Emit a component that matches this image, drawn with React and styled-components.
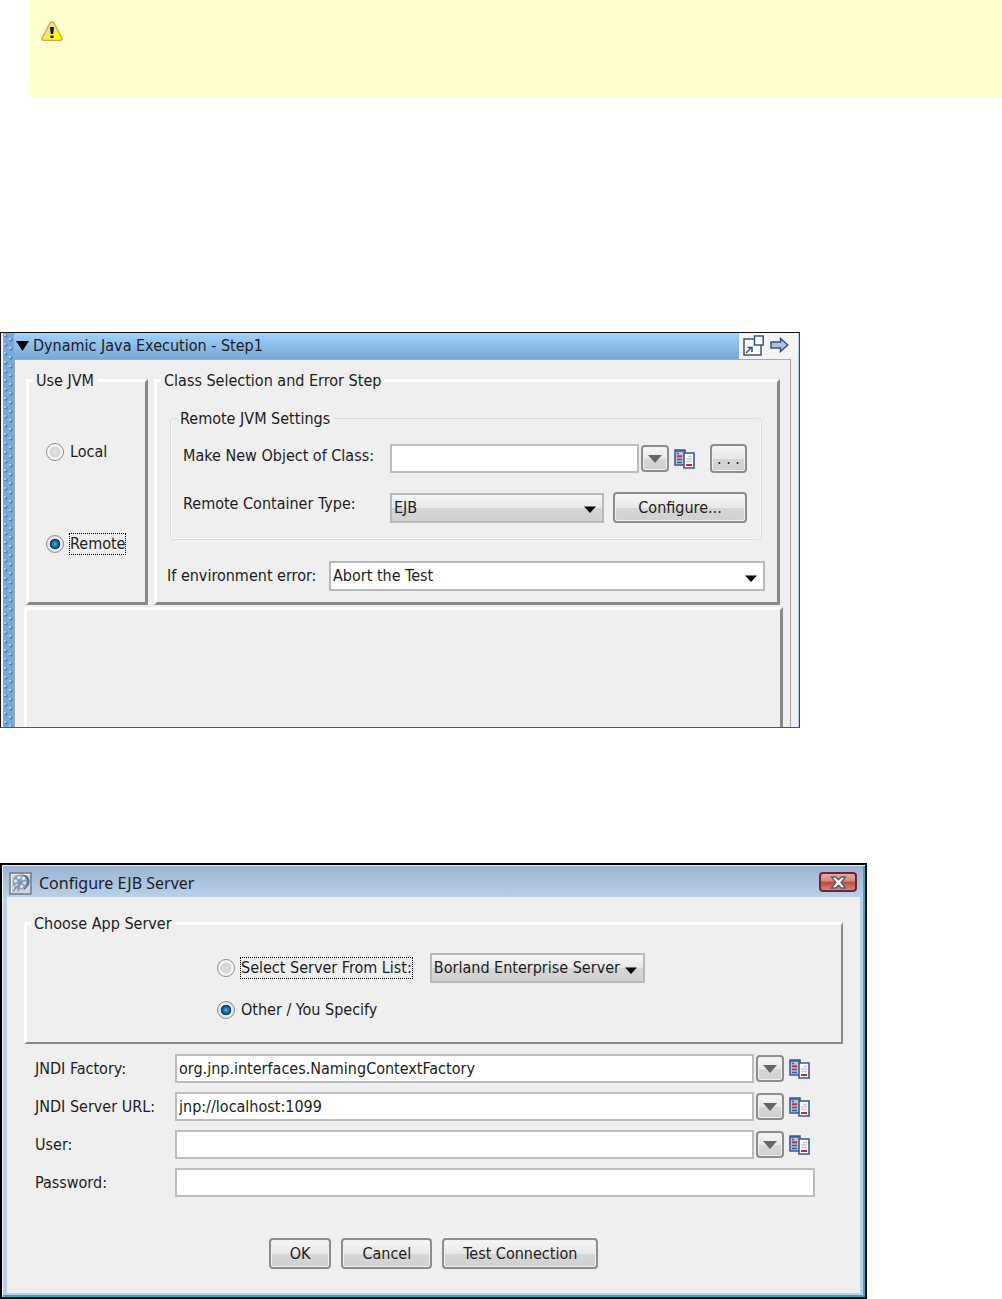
import React from "react"
import styled, { createGlobalStyle, css } from "styled-components"

const App = () => (
  <Page>
    <GlobalStyle />
    <Note>
      <WarningIcon />
    </Note>
    <StepEditor />
    <ServerDialog />
  </Page>
)

export default App

const StepEditor = () => (
  <StepWindow>
    <Grip />
    <StepMain>
      <StepHeader>
        <StepTitle>
          <svg width="13" height="10" viewBox="0 0 13 10" aria-hidden="true">
            <path d="M0 0h13L6.5 10z" fill="#000" />
          </svg>
          Dynamic Java Execution - Step1
        </StepTitle>
        <StepTools>
          <ToolButton aria-label="Pop out">
            <PopOutIcon />
          </ToolButton>
          <ToolButton aria-label="Next">
            <NextIcon />
          </ToolButton>
        </StepTools>
      </StepHeader>
      <StepBody>
        <StepColumns>
          <Group>
            <legend>Use JVM</legend>
            <JvmOptions>
              <RadioLabel>
                <Radio name="jvm" />
                <span>Local</span>
              </RadioLabel>
              <RadioLabel $focused>
                <Radio name="jvm" defaultChecked />
                <span>Remote</span>
              </RadioLabel>
            </JvmOptions>
          </Group>
          <Group>
            <legend>Class Selection and Error Step</legend>
            <ClassArea>
              <SettingsGroup>
                <legend>Remote JVM Settings</legend>
                <SettingsGrid>
                  <label htmlFor="class">Make New Object of Class:</label>
                  <ClassRow>
                    <TextField id="class" />
                    <FieldTools />
                    <MoreButton aria-label="Browse">. . .</MoreButton>
                  </ClassRow>
                  <label htmlFor="container">Remote Container Type:</label>
                  <ContainerRow>
                    <Combo id="container" options={["EJB"]} />
                    <Button>Configure...</Button>
                  </ContainerRow>
                </SettingsGrid>
              </SettingsGroup>
              <ErrorRow>
                <label htmlFor="onerror">If environment error:</label>
                <Combo id="onerror" options={["Abort the Test"]} plain />
              </ErrorRow>
            </ClassArea>
          </Group>
        </StepColumns>
        <EmptyPane />
      </StepBody>
    </StepMain>
  </StepWindow>
)

const ServerDialog = () => (
  <Dialog>
    <DialogTitle>
      <AppIcon />
      <h2>Configure EJB Server</h2>
      <CloseButton aria-label="Close">
        <CloseIcon />
      </CloseButton>
    </DialogTitle>
    <DialogBody>
      <Group>
        <legend>Choose App Server</legend>
        <ServerOptions>
          <ServerRow>
            <RadioLabel $focused>
              <Radio name="server" />
              <span>Select Server From List:</span>
            </RadioLabel>
            <Combo
              aria-label="Server"
              options={["Borland Enterprise Server"]}
            />
          </ServerRow>
          <RadioLabel>
            <Radio name="server" defaultChecked />
            <span>Other / You Specify</span>
          </RadioLabel>
        </ServerOptions>
      </Group>
      <Fields>
        {fields.map(({ id, label, value }) => (
          <FieldRow key={id}>
            <label htmlFor={id}>{label}</label>
            <TextField id={id} defaultValue={value} />
            <FieldTools />
          </FieldRow>
        ))}
        <FieldRow>
          <label htmlFor="password">Password:</label>
          <TextField id="password" type="password" />
        </FieldRow>
      </Fields>
      <Actions>
        <Button>OK</Button>
        <Button>Cancel</Button>
        <Button>Test Connection</Button>
      </Actions>
    </DialogBody>
  </Dialog>
)

const fields = [
  {
    id: "factory",
    label: "JNDI Factory:",
    value: "org.jnp.interfaces.NamingContextFactory",
  },
  { id: "url", label: "JNDI Server URL:", value: "jnp://localhost:1099" },
  { id: "user", label: "User:", value: "" },
]

const Combo = ({ options, plain, ...rest }) => (
  <ComboBox $plain={plain}>
    <select {...rest}>
      {options.map(option => (
        <option key={option}>{option}</option>
      ))}
    </select>
    <svg width="12" height="7" viewBox="0 0 12 7" aria-hidden="true">
      <path d="M0 .5h12L6 7z" fill="#000" />
    </svg>
  </ComboBox>
)

const FieldTools = () => (
  <Tools>
    <ArrowButton aria-label="Show values">
      <svg width="14" height="8" viewBox="0 0 14 8">
        <path d="M0 0h14L7 8z" fill="#666" />
      </svg>
    </ArrowButton>
    <ToolButton aria-label="Copy property">
      <DocsIcon />
    </ToolButton>
  </Tools>
)

const WarningIcon = () => (
  <svg width="22" height="20" viewBox="0 0 22 20" role="img">
    <title>Warning</title>
    <defs>
      <linearGradient id="warn" x1="0" x2="1" y1="0" y2="1">
        <stop offset="0.35" stopColor="#f3dc8e" />
        <stop offset="0.75" stopColor="#ffff00" />
      </linearGradient>
    </defs>
    <path
      d="M9 2Q11 -.4 13 2L20.900 17Q21.400 19.300 19 19.400H3Q.6 19.300 1.100 17z"
      fill="url(#warn)"
      stroke="#d3a25c"
      strokeWidth="1.300"
    />
    <path d="M9 6h4l-.8 7H9.800z" fill="#111" />
    <ellipse cx="11" cy="15.800" rx="1.900" ry="1.500" fill="#3a3510" />
  </svg>
)

const PopOutIcon = () => (
  <svg width="21" height="21" viewBox="0 0 21 21">
    <path d="M1 4h17v16H1z" fill="#fff" stroke="#35528c" strokeWidth="1.500" />
    <path d="M11.500 1h8.700v9h-8.700z" fill="#fff" stroke="#35528c" strokeWidth="1.500" />
    <path d="M3 18l5-5M4.500 12.500H9V17" fill="none" stroke="#35528c" strokeWidth="1.500" />
  </svg>
)

const NextIcon = () => (
  <svg width="19" height="16" viewBox="0 0 19 16">
    <path
      d="M1 5h9.500V1.500L17.800 8l-7.300 6.500V11H1z"
      fill="#b4c3dc"
      stroke="#35528c"
      strokeWidth="1.500"
    />
  </svg>
)

const DocsIcon = () => (
  <svg width="21" height="20" viewBox="0 0 21 20">
    <path d="M1 1h10v15H1z" fill="#b7c4dd" stroke="#3a5796" strokeWidth="1.600" />
    <path d="M1 2h10M3 4.500h2M3 10.500h5M3 13.500h5" stroke="#3a5796" strokeWidth="1.500" />
    <path d="M3 7.300h5" stroke="#f21c1c" strokeWidth="2" />
    <path d="M10 4h10v15H10z" fill="#fff" stroke="#3a5796" strokeWidth="1.600" />
    <path d="M14 7.500h4M12 10h6M12 12.500h6" stroke="#c3cbdc" strokeWidth="1.300" />
    <path d="M12 16h6" stroke="#f21c1c" strokeWidth="2" />
  </svg>
)

const AppIcon = () => (
  <svg width="23" height="23" viewBox="0 0 23 23" aria-hidden="true">
    <path d="M1 1h21v21H1z" fill="#cfd6da" stroke="#747b82" strokeWidth="1.500" />
    <path d="M2.500 20.500v-18h18" fill="none" stroke="#eef1f3" />
    <path
      d="M12 2.500Q20 2 20.500 9Q20.500 15 14 18.500Q17 14 16.500 10Q16 5 12 2.500z"
      fill="#44749c"
    />
    <circle cx="11" cy="10" r="7.500" fill="#86a3b9" />
    <g fill="#dbe6ed">
      <circle cx="10" cy="5.500" r="1.800" />
      <circle cx="14.500" cy="6.500" r="1.800" />
      <circle cx="15.500" cy="11" r="1.600" />
      <circle cx="12.500" cy="14.500" r="1.700" />
      <circle cx="8" cy="13.500" r="1.700" />
      <circle cx="6.500" cy="9" r="1.700" />
    </g>
    <path d="M11.500 10L4 19.500M11.500 10L9 19.500" stroke="#7c95a8" strokeWidth="1.300" />
  </svg>
)

const CloseIcon = () => (
  <svg width="17" height="13" viewBox="0 0 17 13">
    <path
      d="M1.500 1h4.300l2.700 2.800L11.200 1h4.300l-4.400 5.500 4.400 5.500h-4.300L8.500 9.200 5.800 12H1.500l4.400-5.500z"
      fill="#f4f4f6"
      stroke="#555d70"
      strokeWidth="1.300"
    />
  </svg>
)

const GlobalStyle = createGlobalStyle`
  *, *::before, *::after {
    box-sizing: border-box;
  }
  body {
    margin: 0;
    background: #fff;
    color: #1c1c22;
    font: 16px/20px "DejaVu Sans Condensed", "Noto Sans", sans-serif;
  }
  button, input, select {
    font: inherit;
    color: inherit;
    margin: 0;
  }
  svg {
    display: block;
    flex: none;
  }
`

const glossy = css`
  background: linear-gradient(#f6f6f6, #e8e8e8 50%, #d6d6d6 52%, #d0d0d0);
`

const Page = styled.main`
  display: flex;
  flex-direction: column;
`

const Note = styled.aside`
  min-height: 98px;
  margin: 0 0 234px 30px;
  padding: 21px 11px;
  background: #ffffce;
`

const Group = styled.fieldset`
  min-width: 0;
  margin: 0;
  padding: 0 4px;
  border: 3px solid;
  border-color: #fff #8a8a8a #8a8a8a #fff;

  > legend {
    padding: 0 3px;
    line-height: 19px;
  }
`

const SettingsGroup = styled(Group)`
  padding: 0 12px 16px 6px;
  border: 1px solid #d3dfe6;
  border-radius: 4px;
  box-shadow: inset 1px 0 #f8fafb, inset 0 -1px #f8fafb, inset -1px 0 #f8fafb;
`

const Button = styled.button`
  ${glossy}
  height: 31px;
  padding: 0 19px;
  border: 2px solid #8c8c8c;
  border-radius: 4px;
  box-shadow: inset 0 0 0 1px #f1f1f1;
  line-height: 20px;
  white-space: nowrap;
`

const MoreButton = styled(Button)`
  width: 37px;
  height: 29px;
  padding: 0;
`

const ArrowButton = styled(Button)`
  display: grid;
  place-items: center;
  width: 28px;
  height: 27px;
  padding: 0;
`

const ToolButton = styled.button`
  padding: 0;
  border: 0;
  background: none;
`

const Tools = styled.div`
  display: flex;
  align-items: center;
  gap: 5px;
`

const TextField = styled.input`
  flex: 1;
  min-width: 0;
  height: 29px;
  padding: 0 2px;
  border: 2px solid #bcbcc3;
  background: #fff;
`

const ComboBox = styled.div`
  display: grid;
  align-items: center;
  flex: ${props => (props.$plain ? 1 : "none")};
  min-width: 0;

  select {
    grid-area: 1 / 1;
    ${glossy}
    ${props => props.$plain && "background: #fff;"}
    width: 100%;
    height: 30px;
    padding: 0 22px 0 2px;
    border: 2px solid #b8b8bf;
    border-radius: 0;
    appearance: none;
  }
  svg {
    grid-area: 1 / 1;
    justify-self: end;
    margin: 4px 8px 0 0;
    pointer-events: none;
  }
`

const RadioLabel = styled.label`
  display: flex;
  align-items: center;
  gap: 6px;

  span {
    line-height: 20px;
    outline: ${props => (props.$focused ? "1px dotted #000" : "none")};
  }
`

const Radio = styled.input.attrs({ type: "radio" })`
  width: 18px;
  height: 18px;
  border: 1px solid #909090;
  border-radius: 50%;
  background: radial-gradient(circle, #e4e4e4, #d4d4d4 42%, #f6f6f6 52%);
  appearance: none;

  &:checked {
    background: radial-gradient(
      circle,
      #4bc0ee 0,
      #1d6d9c 24%,
      #123b5c 44%,
      #f4f4f4 50%,
      #d8d8d8 72%
    );
  }
`

const StepWindow = styled.section`
  display: flex;
  width: 100%;
  max-width: 800px;
  margin-bottom: 135px;
  padding: 0 1px 0 2px;
  border: 1px solid #111;
  border-right-color: #444;
  border-bottom-color: #555;
  background: #efefef;
  box-shadow: inset 2px 0 #f6f6f6, inset -1px 0 #b4cdf0;
`

const Grip = styled.div`
  width: 11px;
  background: radial-gradient(circle at 2px 2px, #a9d6f5 1px, transparent 1px),
    radial-gradient(circle at 7px 6px, #a9d6f5 1px, transparent 1px),
    radial-gradient(circle at 3px 3px, #4f80b6 1px, transparent 2px),
    radial-gradient(circle at 8px 7px, #4f80b6 1px, transparent 2px), #78a9dc;
  background-size: 11px 9px;
`

const StepMain = styled.div`
  flex: 1;
  min-width: 0;
`

const StepHeader = styled.header`
  display: flex;
  height: 26px;
`

const StepTitle = styled.div`
  display: flex;
  flex: 1;
  align-items: center;
  gap: 4px;
  padding: 0 2px;
  background: linear-gradient(#9fd2fd, #7aa8d4);
`

const StepTools = styled.div`
  display: flex;
  align-items: center;
  gap: 6px;
  padding: 0 9px 2px 4px;
  background: #f4f4f4;
`

const StepBody = styled.div`
  margin-right: 7px;
  padding: 11px 7px 0 9px;
  border: solid #a8a8a8;
  border-width: 1px 1px 0;
`

const StepColumns = styled.div`
  display: grid;
  grid-template-columns: 122px 1fr;
  gap: 6px;
  padding: 0 3px 0 2px;
`

const JvmOptions = styled.div`
  display: grid;
  justify-items: start;
  gap: 72px;
  padding: 52px 13px 0;
`

const ClassArea = styled.div`
  padding: 19px 11px 11px 9px;
`

const SettingsGrid = styled.div`
  display: grid;
  grid-template-columns: 207px 1fr;
  row-gap: 19px;
  padding: 16px 2px 0 6px;

  label {
    line-height: 24px;
  }
`

const ClassRow = styled.div`
  display: flex;
  align-items: center;
  gap: 2px;

  > ${MoreButton} {
    margin-left: 13px;
  }
`

const ContainerRow = styled.div`
  display: flex;
  gap: 9px;

  > div {
    flex: 1;
  }
  > ${Button} {
    min-width: 134px;
  }
`

const ErrorRow = styled.div`
  display: grid;
  grid-template-columns: 162px 1fr;
  align-items: center;
  margin: 21px -3px 0;
`

const EmptyPane = styled.div`
  min-height: 120px;
  margin-top: 2px;
  border: solid;
  border-width: 3px 3px 0;
  border-color: #fff #8a8a8a #fff #fff;
`

const Dialog = styled.section`
  width: 100%;
  max-width: 867px;
  border: 2px solid #000;
  background: linear-gradient(#9ab3d1, #b8d0e9 32px);
  box-shadow: inset 0 1px #e4edf5, inset 1px 0 #f0f6fb, inset -2px 0 #1fb4d6,
    inset 0 -2px #1fb4d6;
`

const DialogTitle = styled.header`
  display: flex;
  align-items: center;
  gap: 7px;
  height: 32px;
  padding: 4px 8px 0 7px;

  h2 {
    flex: 1;
    margin: 0;
    font: 16px/22px "Noto Sans", "Open Sans", sans-serif;
  }
`

const CloseButton = styled.button`
  display: grid;
  place-items: center;
  width: 38px;
  height: 20px;
  margin-bottom: 2px;
  padding: 0;
  border: 2px solid #66283a;
  border-radius: 4px;
  background: linear-gradient(#e5aaa0, #d98578 45%, #bd4632 50%, #d9857a);
`

const DialogBody = styled.div`
  margin: 0 5px 4px;
  padding: 17px 17px 24px;
  background: #efefef;

  ${Group} {
    border-right-width: 2px;
    border-bottom-width: 2px;
  }
`

const ServerOptions = styled.div`
  display: grid;
  justify-items: start;
  gap: 17px;
  padding: 20px 0 22px 186px;
`

const ServerRow = styled.div`
  display: flex;
  align-items: center;
  gap: 18px;
`

const Fields = styled.div`
  display: grid;
  gap: 9px;
  padding: 10px 28px 0 11px;
`

const FieldRow = styled.div`
  display: flex;
  align-items: center;

  label {
    flex: none;
    width: 140px;
  }
  ${Tools} {
    margin: 0 5px 0 2px;
  }
`

const Actions = styled.div`
  display: flex;
  justify-content: center;
  gap: 10px;
  padding-top: 41px;
`
